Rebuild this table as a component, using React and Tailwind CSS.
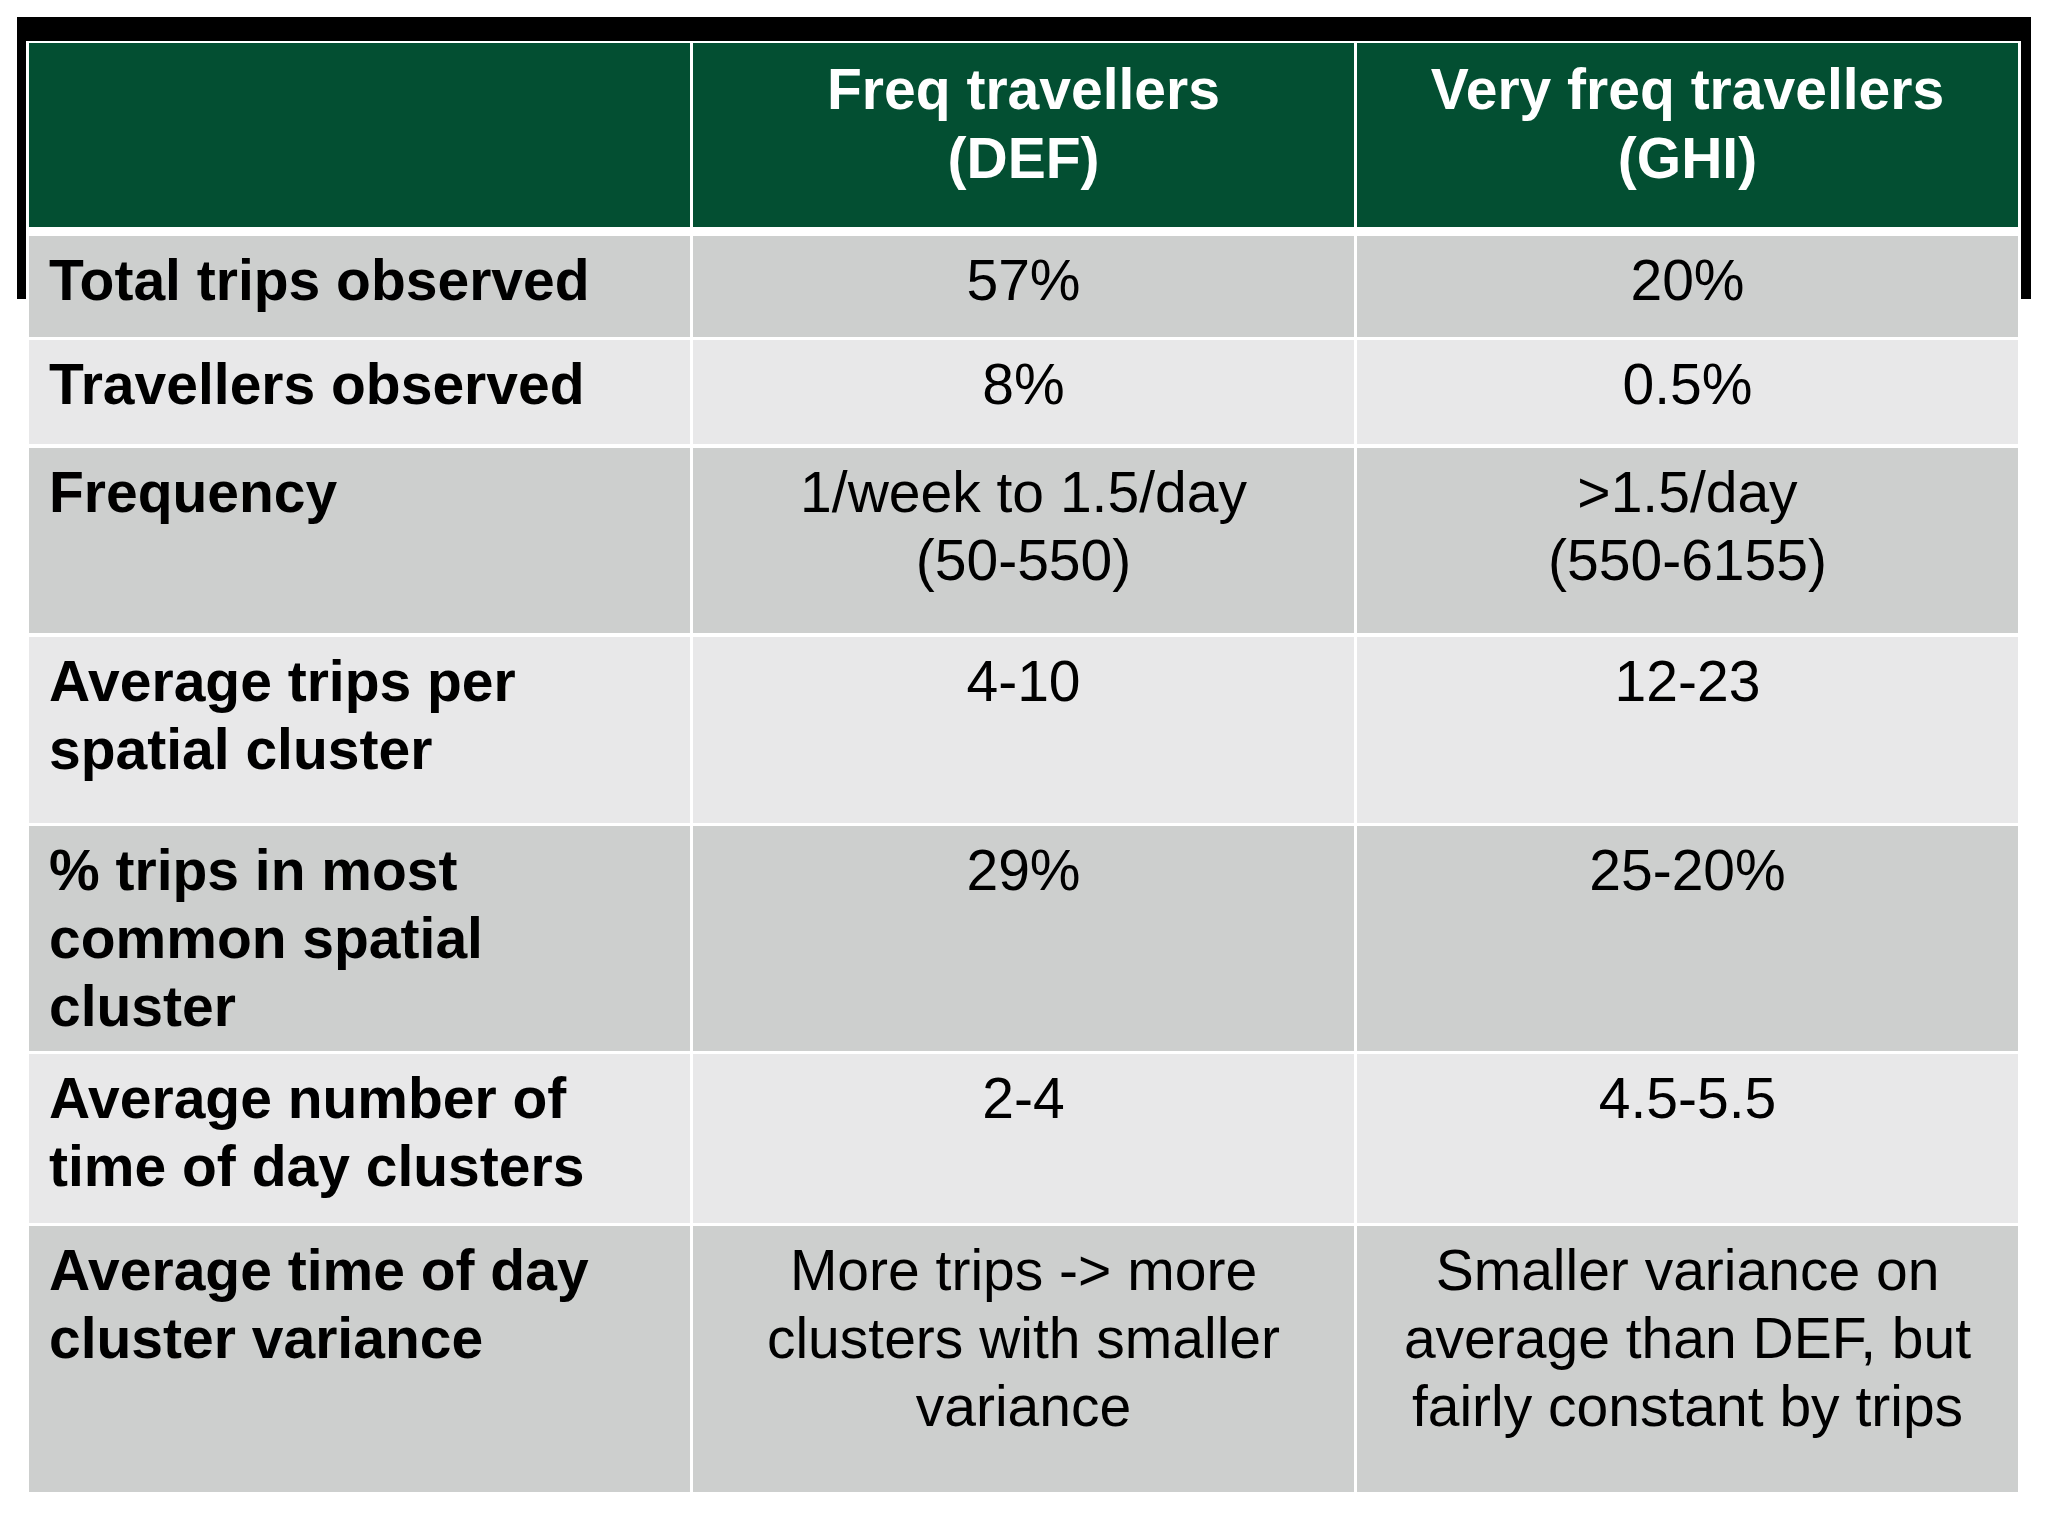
const ROWS = [
  { label: ['Total trips observed'], def: ['57%'], ghi: ['20%'], h: 'h-[101px]', mt: 'mt-[9px]', bg: 'bg-[#cdcfce]' },
  { label: ['Travellers observed'], def: ['8%'], ghi: ['0.5%'], h: 'h-[104px]', mt: 'mt-[3px]', bg: 'bg-[#e8e8e9]' },
  { label: ['Frequency'], def: ['1/week to 1.5/day', '(50-550)'], ghi: ['>1.5/day', '(550-6155)'], h: 'h-[185px]', mt: 'mt-[4px]', bg: 'bg-[#cdcfce]' },
  { label: ['Average trips per', 'spatial cluster'], def: ['4-10'], ghi: ['12-23'], h: 'h-[186px]', mt: 'mt-[4px]', bg: 'bg-[#e8e8e9]' },
  { label: ['% trips in most', 'common spatial', 'cluster'], def: ['29%'], ghi: ['25-20%'], h: 'h-[225px]', mt: 'mt-[3px]', bg: 'bg-[#cdcfce]' },
  { label: ['Average number of', 'time of day clusters'], def: ['2-4'], ghi: ['4.5-5.5'], h: 'h-[169px]', mt: 'mt-[3px]', bg: 'bg-[#e8e8e9]' },
  {
    label: ['Average time of day', 'cluster variance'],
    def: ['More trips -> more', 'clusters with smaller', 'variance'],
    ghi: ['Smaller variance on', 'average than DEF, but', 'fairly constant by trips'],
    h: 'h-[266px]',
    mt: 'mt-[3px]',
    bg: 'bg-[#cdcfce]',
  },
];

function Lines({ lines }) {
  return lines.map((line, i) => (
    <div key={i} className="whitespace-nowrap">
      {line}
    </div>
  ));
}

export default function App() {
  return (
    <div
      className="min-h-screen bg-white pt-[17px] pl-[17px] text-black"
      style={{ fontFamily: '"Liberation Sans", Arial, sans-serif' }}
    >
      <div className="w-[2014px] h-[282px] border-t-[24px] border-l-[9px] border-r-[10px] border-black">
        <div className="ml-[3px] w-[1989px] bg-white pt-[2px]">
          {/* header */}
          <div className="grid grid-cols-3 gap-x-[3px] h-[184px]">
            <div className="bg-[#034f32]" />
            <div className="bg-[#034f32] pt-[12px] text-center text-[57px] leading-[69px] font-bold text-white">
              <Lines lines={['Freq travellers', '(DEF)']} />
            </div>
            <div className="bg-[#034f32] pt-[12px] text-center text-[57px] leading-[69px] font-bold text-white">
              <Lines lines={['Very freq travellers', '(GHI)']} />
            </div>
          </div>

          {ROWS.map((row, i) => (
            <div key={i} className={`grid grid-cols-3 gap-x-[3px] ${row.h} ${row.mt}`}>
              <div className={`${row.bg} pl-[20px] pt-[10px] text-[57px] leading-[68px] font-bold`}>
                <Lines lines={row.label} />
              </div>
              <div className={`${row.bg} pt-[10px] text-center text-[57px] leading-[68px]`}>
                <Lines lines={row.def} />
              </div>
              <div className={`${row.bg} pt-[10px] text-center text-[57px] leading-[68px]`}>
                <Lines lines={row.ghi} />
              </div>
            </div>
          ))}
        </div>
      </div>
    </div>
  );
}
